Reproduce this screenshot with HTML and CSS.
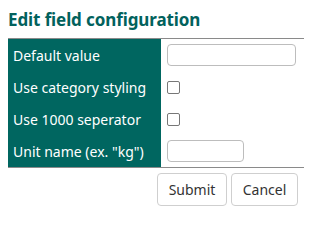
FILE: index.html
```html
<!DOCTYPE html>
<html>
<head>
<meta charset="utf-8">
<link rel="stylesheet" href="styles.css">
</head>
<body>
<h2 class="title">Edit field configuration</h2>
<table class="config">
  <tr>
    <th class="label">Default value</th>
    <td class="field"><input class="text wide" type="text"></td>
  </tr>
  <tr>
    <th class="label">Use category styling</th>
    <td class="field"><span class="check"></span></td>
  </tr>
  <tr>
    <th class="label">Use 1000 seperator</th>
    <td class="field"><span class="check"></span></td>
  </tr>
  <tr>
    <th class="label">Unit name (ex. "kg")</th>
    <td class="field"><input class="text short" type="text"></td>
  </tr>
</table>
<div class="actions">
  <button class="btn submit">Submit</button>
  <button class="btn cancel">Cancel</button>
</div>
</body>
</html>
```
FILE: styles.css
```css
html, body {
  margin: 0;
  padding: 0;
  background: #ffffff;
}
body {
  padding: 8px;
  font-family: "Noto Sans", "Open Sans", sans-serif;
  font-size: 14px;
  color: #333;
}
.title {
  margin: 0 0 6px 0;
  font-size: 17px;
  line-height: 24px;
  font-weight: bold;
  color: #02625d;
  letter-spacing: -0.1px;
}
.config {
  border-collapse: collapse;
  width: 296px;
  border-top: 1px solid #8a8a8a;
  border-bottom: 1px solid #8a8a8a;
}
.label {
  background: #006660;
  color: #ffffff;
  font-weight: normal;
  text-align: left;
  width: 143px;
  padding: 0 5px;
  height: 32px;
  white-space: nowrap;
}
.field {
  padding: 0 6px;
  height: 32px;
  vertical-align: middle;
}
.text {
  display: block;
  box-sizing: border-box;
  height: 22px;
  border: 1px solid #bdbdbd;
  border-radius: 4px;
  margin: 0;
  padding: 0 4px;
  background: #fff;
}
.wide { width: 129px; }
.short { width: 77px; }
.check {
  display: block;
  box-sizing: border-box;
  width: 13px;
  height: 13px;
  border: 1px solid #777;
  border-radius: 2px;
  background: #fff;
}
.actions {
  display: flex;
  justify-content: flex-end;
  gap: 4px;
  width: 290px;
  margin-top: 5px;
}
.btn {
  font-family: inherit;
  font-size: 14px;
  color: #333;
  background: #fff;
  border: 1px solid #cfcfcf;
  border-radius: 4px;
  height: 33px;
  padding: 0;
  margin: 0;
}
.submit { width: 70px; }
.cancel { width: 67px; }
```
